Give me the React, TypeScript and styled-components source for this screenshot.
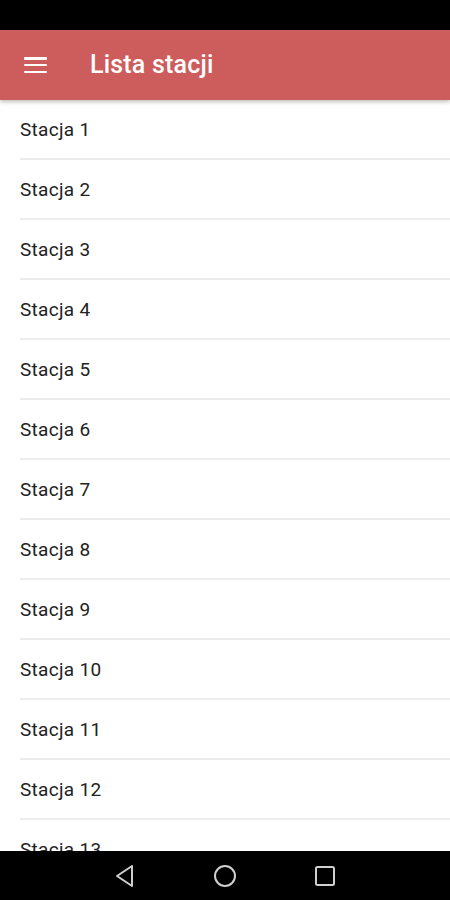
import React from 'react';
import styled, { createGlobalStyle } from 'styled-components';

const GlobalStyle = createGlobalStyle`
  html, body {
    margin: 0;
    padding: 0;
    background: #000;
  }
  * {
    box-sizing: border-box;
  }
`;

const Screen = styled.div`
  width: 450px;
  height: 900px;
  display: flex;
  flex-direction: column;
  background: #fff;
  font-family: Roboto, "Liberation Sans", sans-serif;
  overflow: hidden;
`;

const StatusBar = styled.div`
  height: 30px;
  flex-shrink: 0;
  background: #000;
`;

const AppBar = styled.header`
  height: 70px;
  flex-shrink: 0;
  display: flex;
  align-items: center;
  padding-left: 24px;
  background: #cd5c5c;
  box-shadow: 0 2px 4px rgba(0, 0, 0, 0.25);
  position: relative;
  z-index: 1;
`;

const MenuButton = styled.div`
  width: 23px;
  height: 16px;
  display: flex;
  flex-direction: column;
  justify-content: space-between;
  margin-right: 43px;

  span {
    display: block;
    height: 2.5px;
    background: #fff;
    border-radius: 1px;
  }
`;

const Title = styled.h1`
  margin: 0 0 1px;
  font-size: 25px;
  font-weight: 500;
  color: #fff;
  letter-spacing: 0.2px;
`;

const List = styled.ul`
  flex: 1;
  margin: 0;
  padding: 0;
  list-style: none;
  overflow: hidden;
`;

const Item = styled.li`
  height: 60px;
  margin-left: 20px;
  display: flex;
  align-items: center;
  font-size: 19px;
  letter-spacing: 0.3px;
  color: #222;
  border-bottom: 2px solid #ececec;
`;

const NavBar = styled.nav`
  height: 49px;
  flex-shrink: 0;
  background: #000;
  display: flex;
  align-items: center;
  justify-content: center;
  gap: 78px;
`;

const NavIcon = styled.svg`
  width: 22px;
  height: 24px;
  fill: none;
  stroke: #cfcfcf;
  stroke-width: 2;
  stroke-linejoin: round;
`;

const stations = Array.from({ length: 13 }, (_, i) => `Stacja ${i + 1}`);

const App: React.FC = () => {
  return (
    <>
      <GlobalStyle />
      <Screen>
        <StatusBar />
        <AppBar>
          <MenuButton>
            <span />
            <span />
            <span />
          </MenuButton>
          <Title>Lista stacji</Title>
        </AppBar>
        <List>
          {stations.map((s) => (
            <Item key={s}>{s}</Item>
          ))}
        </List>
        <NavBar>
          <NavIcon viewBox="0 0 22 24">
            <path d="M18 2 L3 12 L18 22 Z" />
          </NavIcon>
          <NavIcon viewBox="0 0 22 24">
            <circle cx="11" cy="12" r="10" />
          </NavIcon>
          <NavIcon viewBox="0 0 22 24">
            <rect x="2" y="3" width="18" height="18" rx="1.5" />
          </NavIcon>
        </NavBar>
      </Screen>
    </>
  );
};

export default App;
